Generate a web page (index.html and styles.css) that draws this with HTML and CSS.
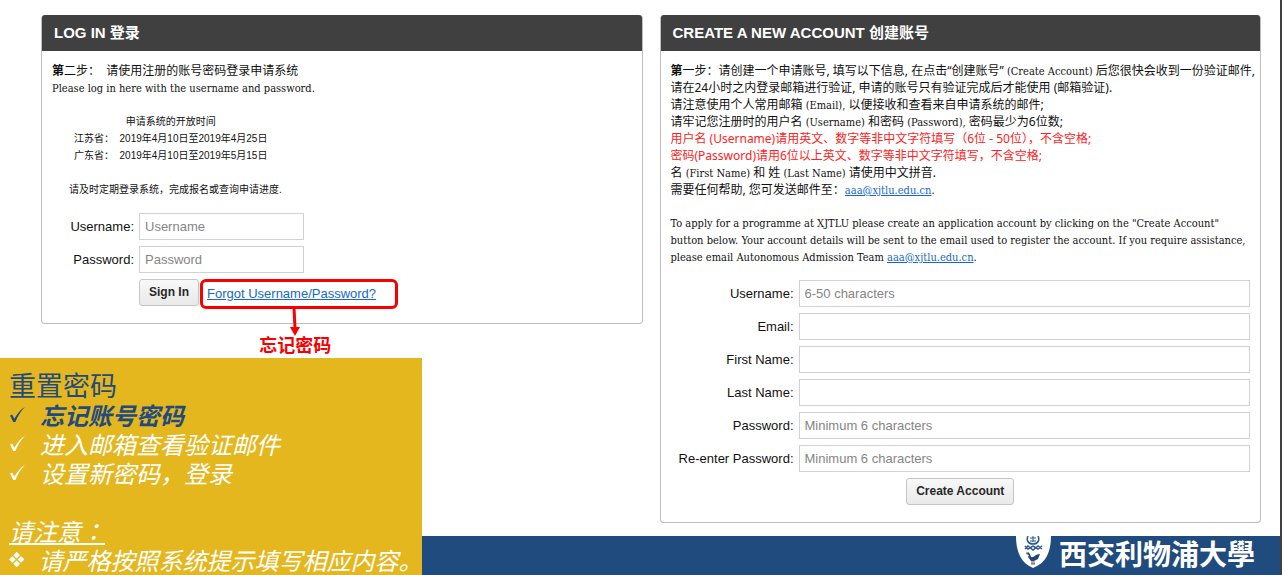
FILE: index.html
```html
<!DOCTYPE html>
<html lang="zh-CN">
<head>
<meta charset="utf-8">
<title>重置密码</title>
<link rel="stylesheet" href="styles.css">
</head>
<body>
<div class="page">
  <main class="columns">
    <section class="card">
      <h2 class="card-title">LOG IN 登录</h2>
      <div class="card-body">
        <p class="copy"><b>第</b>二步：&nbsp; 请使用注册的账号密码登录申请系统<br><span class="english">Please log in here with the username and password.</span></p>
        <div class="schedule">
          <p class="schedule-title">申请系统的开放时间</p>
          <p>江苏省：&nbsp; 2019年4月10日至2019年4月25日</p>
          <p>广东省：&nbsp; 2019年4月10日至2019年5月15日</p>
        </div>
        <p class="reminder">请及时定期登录系统，完成报名或查询申请进度.</p>
        <form class="form form-login">
          <label for="login-user">Username:</label>
          <input id="login-user" type="text" placeholder="Username">
          <label for="login-pass">Password:</label>
          <input id="login-pass" type="password" placeholder="Password">
          <div class="actions">
            <button type="button" class="button">Sign In</button>
            <span class="marked">
              <a href="#forgot">Forgot Username/Password?</a>
              <span class="callout">
                <svg class="arrow" viewBox="0 0 12 28" width="12" height="28" aria-hidden="true"><path d="M5 0L6 20" stroke="#f80000" stroke-width="3"/><path d="M1 19H11L6 28Z" fill="#f80000"/></svg>
                <strong>忘记密码</strong>
              </span>
            </span>
          </div>
        </form>
      </div>
    </section>
    <section class="card">
      <h2 class="card-title">CREATE A NEW ACCOUNT 创建账号</h2>
      <div class="card-body">
        <p class="copy"><b>第</b>一步：请创建一个申请账号, 填写以下信息, 在点击“创建账号” <span class="english">(Create Account)</span> 后您很快会收到一份验证邮件,<br>
        请在24小时之内登录邮箱进行验证, 申请的账号只有验证完成后才能使用 (邮箱验证).<br>
        请注意使用个人常用邮箱 <span class="english">(Email),</span> 以便接收和查看来自申请系统的邮件;<br>
        请牢记您注册时的用户名 <span class="english">(Username)</span> 和密码 <span class="english">(Password),</span> 密码最少为6位数;<br>
        <span class="warning">用户名 (Username)请用英文、数字等非中文字符填写（6位 - 50位），不含空格;</span><br>
        <span class="warning">密码(Password)请用6位以上英文、数字等非中文字符填写，不含空格;</span><br>
        名 <span class="english">(First Name)</span> 和 姓 <span class="english">(Last Name)</span> 请使用中文拼音.<br>
        需要任何帮助, 您可发送邮件至：<span class="english"><a href="mailto:aaa@xjtlu.edu.cn">aaa@xjtlu.edu.cn</a>.</span></p>
        <p class="copy copy-english">To apply for a programme at XJTLU please create an application account by clicking on the "Create Account"<br>
        button below. Your account details will be sent to the email used to register the account. If you require assistance,<br>
        please email Autonomous Admission Team <a href="mailto:aaa@xjtlu.edu.cn">aaa@xjtlu.edu.cn</a>.</p>
        <form class="form form-create">
          <label for="new-user">Username:</label>
          <input id="new-user" type="text" placeholder="6-50 characters">
          <label for="new-email">Email:</label>
          <input id="new-email" type="email">
          <label for="new-first">First Name:</label>
          <input id="new-first" type="text">
          <label for="new-last">Last Name:</label>
          <input id="new-last" type="text">
          <label for="new-pass">Password:</label>
          <input id="new-pass" type="password" placeholder="Minimum 6 characters">
          <label for="new-again">Re-enter Password:</label>
          <input id="new-again" type="password" placeholder="Minimum 6 characters">
          <div class="submit"><button type="button" class="button">Create Account</button></div>
        </form>
      </div>
    </section>
  </main>
  <footer class="footer">
    <svg class="crest" viewBox="0 0 35 32" width="35" height="32" aria-hidden="true">
      <path d="M0 0H35C35 16 30 27 17 32C5 27 0 16 0 0Z" fill="#fff"/>
      <g fill="none" stroke="#285a8d" stroke-width="1">
        <path d="M12 0C10 4 12 8 17 8S24 4 22 0" stroke-width="1.5"/>
        <path d="M14 2H20M17 0V6M14 5H20"/>
        <path d="M9 10L12 13L17 10L22 13L26 10M9 13L12 10L17 14L22 10L26 13" stroke-width="1.5"/>
      </g>
      <path d="M12 16L14 18L15 21C18 22 19 18 24 18L22 23L18 25H15L12 21L13 19L10 18Z" fill="#1d477a"/>
      <path d="M16 25V28M18 25V28M15 28H19" stroke="#8c4b50" fill="none"/>
      <path d="M10 16L12 17" stroke="#6dbb8a"/>
    </svg>
    <span class="university">西交利物浦大學</span>
  </footer>
  <aside class="notes">
    <h1>重置密码</h1>
    <ul>
      <li class="current"><svg class="mark" viewBox="0 0 16 16" aria-hidden="true"><path d="M1 9L3 8L5 12C8 7 11 3 15 1C11 5 8 10 6 15H4Z"/></svg><b>忘记账号密码</b></li>
      <li><svg class="mark" viewBox="0 0 16 16" aria-hidden="true"><path d="M1 9L3 8L5 12C8 7 11 3 15 1C11 5 8 10 6 15H4Z"/></svg>进入邮箱查看验证邮件</li>
      <li><svg class="mark" viewBox="0 0 16 16" aria-hidden="true"><path d="M1 9L3 8L5 12C8 7 11 3 15 1C11 5 8 10 6 15H4Z"/></svg>设置新密码，登录</li>
    </ul>
    <p class="attention">请注意<span lang="zh-TW" class="centered">：</span></p>
    <ul>
      <li><svg class="mark" viewBox="0 0 16 16" aria-hidden="true"><path d="M8 0L11.5 3.5L8 7L4.5 3.5ZM3.5 4.5L7 8L3.5 11.5L0 8ZM12.5 4.5L16 8L12.5 11.5L9 8ZM8 9L11.5 12.5L8 16L4.5 12.5Z"/></svg>请严格按照系统提示填写相应内容。</li>
    </ul>
  </aside>
</div>
</body>
</html>
```
FILE: styles.css
```css
* { box-sizing: border-box; }

body {
  margin: 0;
  background: #fff;
  color: #111;
  font: 13px/17px "Liberation Sans", "Noto Sans CJK SC", sans-serif;
}

h1, h2, p, ul { margin: 0; padding: 0; }

.page {
  position: relative;
  display: flex;
  flex-direction: column;
  min-height: 100vh;
  border-right: 2px solid #404040;
}

.columns {
  display: grid;
  grid-template-columns: minmax(0, 1fr) minmax(0, 1fr);
  align-items: start;
  gap: 17px;
  padding: 15px 19px 13px 41px;
}

.card {
  border: 1px solid #bdbdbd;
  border-top: 0;
  border-radius: 4px;
}

.card-title {
  padding: 0 12px;
  border-radius: 3px 3px 0 0;
  background: #404040;
  color: #fff;
  font-size: 15px;
  line-height: 36px;
}

.card-body { padding: 11px 10px 17px; }

.copy {
  margin-bottom: 17px;
  font: 12px/17px "Noto Sans", "Noto Sans CJK SC", sans-serif;
  white-space: nowrap;
}

.english, .copy-english {
  font-family: "DejaVu Serif Condensed", "DejaVu Serif", serif;
  font-size: 11px;
}

.english { line-height: 1; }

.copy-english { margin-bottom: 14px; }

.warning { color: #f22; }

.schedule, .reminder {
  font: 10px/17px "Liberation Sans", "Noto Sans CJK SC", sans-serif;
}

.schedule {
  width: max-content;
  margin-left: 22px;
}

.schedule-title { text-align: center; }

.reminder { margin: 17px 0 15px 17px; }

a { color: #1668c7; }

.form {
  display: grid;
  align-items: center;
  gap: 6px 5px;
}

.form label { text-align: right; }

.form-login {
  grid-template-columns: 82px 165px;
  justify-content: start;
}

.form-create { grid-template-columns: 123px 1fr; }

.form input {
  width: 100%;
  height: 27px;
  padding: 0 5px;
  border: 1px solid #d2d2d2;
  background: #fff;
  font: inherit;
}

.form input::placeholder { color: #858585; opacity: 1; }

.button {
  height: 27px;
  padding: 0 9px;
  border: 1px solid #c6c6c6;
  border-radius: 3px;
  background: linear-gradient(#f8f8f8, #e9e9e9);
  color: #282828;
  font: bold 12px/17px "Liberation Sans", sans-serif;
}

.actions {
  grid-column: 2;
  display: flex;
  align-items: flex-start;
  gap: 1px;
  width: max-content;
}

.marked {
  position: relative;
  width: 198px;
  margin-bottom: -3px;
  padding: 3px 4px 4px;
  border: 3px solid #f80000;
  border-radius: 6px;
}

.callout {
  position: absolute;
  top: 26px;
  left: 48%;
  display: flex;
  flex-direction: column;
  align-items: center;
  transform: translateX(-50%);
  color: #f80000;
  font-size: 18px;
  line-height: 20px;
  white-space: nowrap;
}

.submit { grid-column: 1 / 3; text-align: center; }
.submit .button { vertical-align: top; }

.footer {
  flex: 1;
  display: flex;
  align-items: flex-start;
  justify-content: flex-end;
  gap: 8px;
  min-height: 39px;
  padding-right: 25px;
  background: #1f4b7e;
  color: #fff;
}

.university {
  font: bold 28px/34px "Noto Sans CJK SC", sans-serif;
}

.notes {
  position: absolute;
  bottom: 0;
  left: 0;
  width: 33%;
  padding: 12px 0 1px 9px;
  background: #e4b71f;
  color: #fff;
  font: 24px/29px "Noto Sans CJK SC", sans-serif;
  white-space: nowrap;
}

.notes h1 {
  color: #1f4b7e;
  font-size: 27px;
  font-weight: 400;
  line-height: 30px;
}

.notes ul { list-style: none; }

.notes li {
  display: flex;
  align-items: center;
  font-style: italic;
}

.notes .current { color: #1f4b7e; }

.centered { font-family: "Noto Sans CJK TC", sans-serif; }

.mark {
  width: 17px;
  height: 17px;
  margin-right: 14px;
  fill: currentColor;
}

.attention {
  margin-top: 29px;
  font-style: italic;
  text-decoration: underline;
}
```
